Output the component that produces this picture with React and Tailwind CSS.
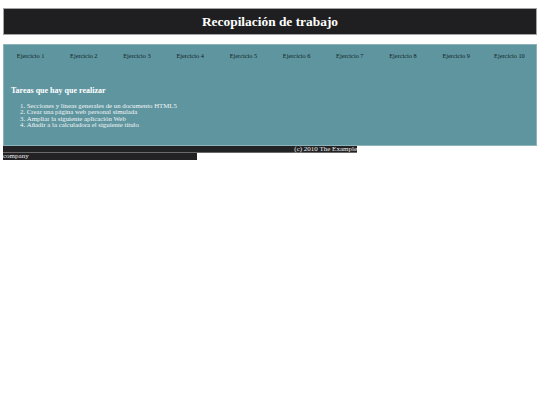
import React from "react";

const ejercicios = [
  "Ejercicio 1",
  "Ejercicio 2",
  "Ejercicio 3",
  "Ejercicio 4",
  "Ejercicio 5",
  "Ejercicio 6",
  "Ejercicio 7",
  "Ejercicio 8",
  "Ejercicio 9",
  "Ejercicio 10",
];

const tareas = [
  "Secciones y lineas generales de un documento HTML5",
  "Crear una página web personal simulada",
  "Ampliar la siguiente aplicación Web",
  "Añadir a la calculadora el siguiente título",
];

export default function App() {
  return (
    <div className="min-h-screen bg-white font-['Liberation_Serif',serif]">
      <div className="px-[3px] pt-[8px]">
        {/* Cabecera */}
        <header className="h-[27px] bg-[#1f1f21] border border-[#a3a3a3] flex items-center justify-center">
          <h1 className="text-[13.4px] font-bold text-white leading-none">
            Recopilación de trabajo
          </h1>
        </header>

        {/* Menú + contenido */}
        <div className="mt-[9px] h-[102px] bg-[#5f959f] border border-[#8db4bb]">
          <nav className="grid grid-cols-10 pt-[7px]">
            {ejercicios.map((e) => (
              <a
                key={e}
                href="#"
                className="text-center text-[6.3px] leading-[8px] text-[#0e2327]"
              >
                {e}
              </a>
            ))}
          </nav>

          <section className="pl-[7px] pt-[26px] text-white">
            <h2 className="text-[8px] font-bold leading-[10px]">
              Tareas que hay que realizar
            </h2>
            <ol className="list-decimal list-inside pl-[9px] mt-[7px] text-[6.8px] leading-[6.3px] text-[#f2f6f7]">
              {tareas.map((t) => (
                <li key={t}>{t}</li>
              ))}
            </ol>
          </section>
        </div>

        {/* Pie */}
        <footer className="text-[7px] leading-[7px] text-[#ececec]">
          <div className="w-[354px] h-[7px] bg-[#222224] text-right border-b border-[#6a6a6a]">
            (c) 2010 The Example
          </div>
          <div className="w-[194px] h-[7px] bg-[#222224]">company</div>
        </footer>
      </div>
    </div>
  );
}
